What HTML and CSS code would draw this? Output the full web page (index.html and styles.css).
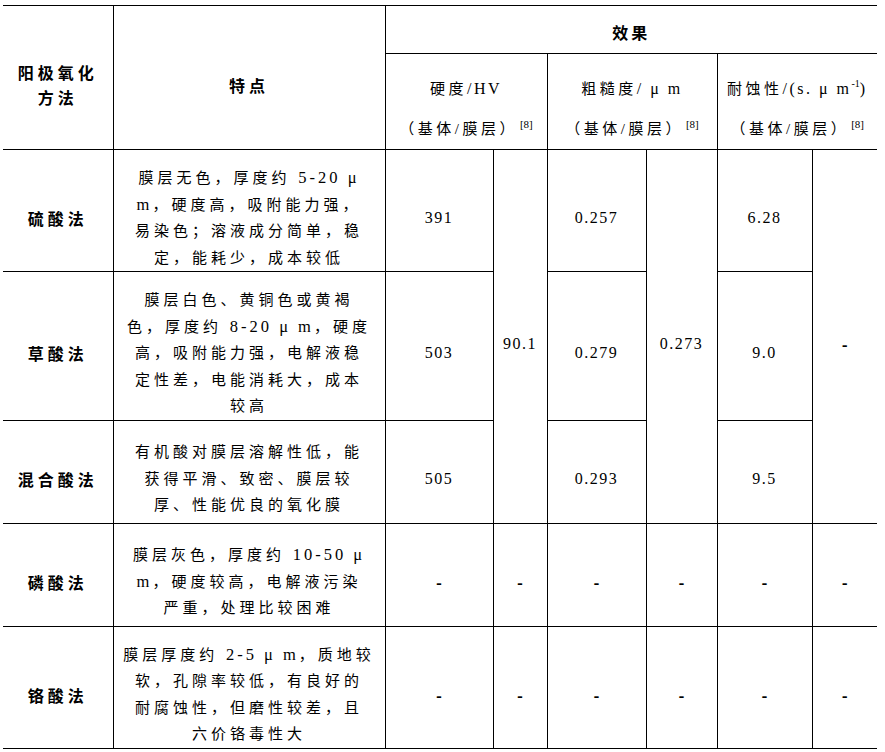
FILE: index.html
```html
<!DOCTYPE html>
<html lang="zh-CN">
<head>
<meta charset="utf-8">
<title>阳极氧化方法</title>
<link rel="stylesheet" href="styles.css">
</head>
<body>
<table class="tbl">
  <colgroup>
    <col class="c1"><col class="c2"><col class="c3"><col class="c4">
    <col class="c5"><col class="c6"><col class="c7"><col class="c8">
  </colgroup>
  <tr class="h1">
    <th rowspan="2" class="hd first">阳极氧化<br>方法</th>
    <th rowspan="2" class="hd">特点</th>
    <th colspan="6" class="hd last effect">效果</th>
  </tr>
  <tr class="h2">
    <th colspan="2" class="sub">硬度<span class="lt">/HV</span><br>（基体/膜层）<sup class="ref">[8]</sup></th>
    <th colspan="2" class="sub">粗糙度<span class="lt">/ μ m</span><br>（基体/膜层）<sup class="ref">[8]</sup></th>
    <th colspan="2" class="sub last">耐蚀性<span class="lt">/(s. μ m<sup class="exp">-1</sup>)</span><br>（基体/膜层）<sup class="ref">[8]</sup></th>
  </tr>
  <tr class="r1">
    <td class="name first">硫酸法</td>
    <td class="desc">膜层无色，厚度约 <span class="lt">5-20 μ</span><br><span class="lt">m</span>，硬度高，吸附能力强，<br>易染色；溶液成分简单，稳<br>定，能耗少，成本较低</td>
    <td class="num">391</td>
    <td rowspan="3" class="num">90.1</td>
    <td class="num">0.257</td>
    <td rowspan="3" class="num">0.273</td>
    <td class="num">6.28</td>
    <td rowspan="3" class="num dash last">-</td>
  </tr>
  <tr class="r2">
    <td class="name first">草酸法</td>
    <td class="desc">膜层白色、黄铜色或黄褐<br>色，厚度约 <span class="lt">8-20 μ m</span>，硬度<br>高，吸附能力强，电解液稳<br>定性差，电能消耗大，成本<br>较高</td>
    <td class="num">503</td>
    <td class="num">0.279</td>
    <td class="num">9.0</td>
  </tr>
  <tr class="r3">
    <td class="name first">混合酸法</td>
    <td class="desc">有机酸对膜层溶解性低，能<br>获得平滑、致密、膜层较<br>厚、性能优良的氧化膜</td>
    <td class="num">505</td>
    <td class="num">0.293</td>
    <td class="num">9.5</td>
  </tr>
  <tr class="r4">
    <td class="name first">磷酸法</td>
    <td class="desc">膜层灰色，厚度约 <span class="lt">10-50 μ</span><br><span class="lt">m</span>，硬度较高，电解液污染<br>严重，处理比较困难</td>
    <td class="num dash">-</td>
    <td class="num dash">-</td>
    <td class="num dash">-</td>
    <td class="num dash">-</td>
    <td class="num dash">-</td>
    <td class="num dash last">-</td>
  </tr>
  <tr class="r5">
    <td class="name first">铬酸法</td>
    <td class="desc">膜层厚度约 <span class="lt">2-5 μ m</span>，质地较<br>软，孔隙率较低，有良好的<br>耐腐蚀性，但磨性较差，且<br>六价铬毒性大</td>
    <td class="num dash">-</td>
    <td class="num dash">-</td>
    <td class="num dash">-</td>
    <td class="num dash">-</td>
    <td class="num dash">-</td>
    <td class="num dash last">-</td>
  </tr>
</table>
</body>
</html>
```

FILE: styles.css
```css
html, body {
  margin: 0;
  padding: 0;
  background: #fff;
}

body {
  font-family: "Liberation Serif", "Noto Sans CJK SC", serif;
  color: #000;
}

.tbl {
  margin: 5px 0 0 3px;
  border-collapse: collapse;
  table-layout: fixed;
  width: 874px;
}

.c1 { width: 110px; }
.c2 { width: 272px; }
.c3 { width: 108px; }
.c4 { width: 54px; }
.c5 { width: 99px; }
.c6 { width: 71px; }
.c7 { width: 95px; }
.c8 { width: 65px; }

.tbl th,
.tbl td {
  border: 1px solid #000;
  padding: 15px 0 0;
  text-align: center;
  vertical-align: middle;
}

.tbl .first { border-left: none; }
.tbl .last { border-right: none; }

.h1 { height: 48px; }
.h2 { height: 93px; }
.r1 { height: 122px; }
.r2 { height: 147px; }
.r3 { height: 103px; }
.r4 { height: 103px; }
.r5 { height: 122px; }

.hd {
  font-family: "Noto Sans CJK SC", sans-serif;
  font-weight: 700;
  font-size: 16px;
  line-height: 25px;
  letter-spacing: 4px;
}

.hd.effect {
  padding-top: 6px;
  letter-spacing: 3px;
}

.sub {
  font-weight: 400;
  font-size: 15px;
  line-height: 40px;
  letter-spacing: 3.5px;
  vertical-align: top;
  padding-top: 13px;
}

.sub .lt {
  font-size: 16px;
  letter-spacing: 2.5px;
}

.ref {
  font-size: 11px;
  letter-spacing: 0;
  vertical-align: 6px;
  line-height: 0;
  margin-left: 2px;
}

.exp {
  font-size: 10px;
  letter-spacing: 0;
  vertical-align: 7px;
  line-height: 0;
}

.name {
  font-family: "Noto Sans CJK SC", sans-serif;
  font-weight: 700;
  font-size: 16px;
  letter-spacing: 4px;
}

.desc {
  font-size: 15px;
  line-height: 26.5px;
  letter-spacing: 4px;
  padding-top: 14px;
}

.desc .lt {
  font-size: 16.5px;
  letter-spacing: 3px;
}

.num {
  font-size: 16px;
  letter-spacing: 1.5px;
}

.dash {
  font-family: "Noto Sans CJK SC", sans-serif;
  font-weight: 700;
  letter-spacing: 0;
}
```
